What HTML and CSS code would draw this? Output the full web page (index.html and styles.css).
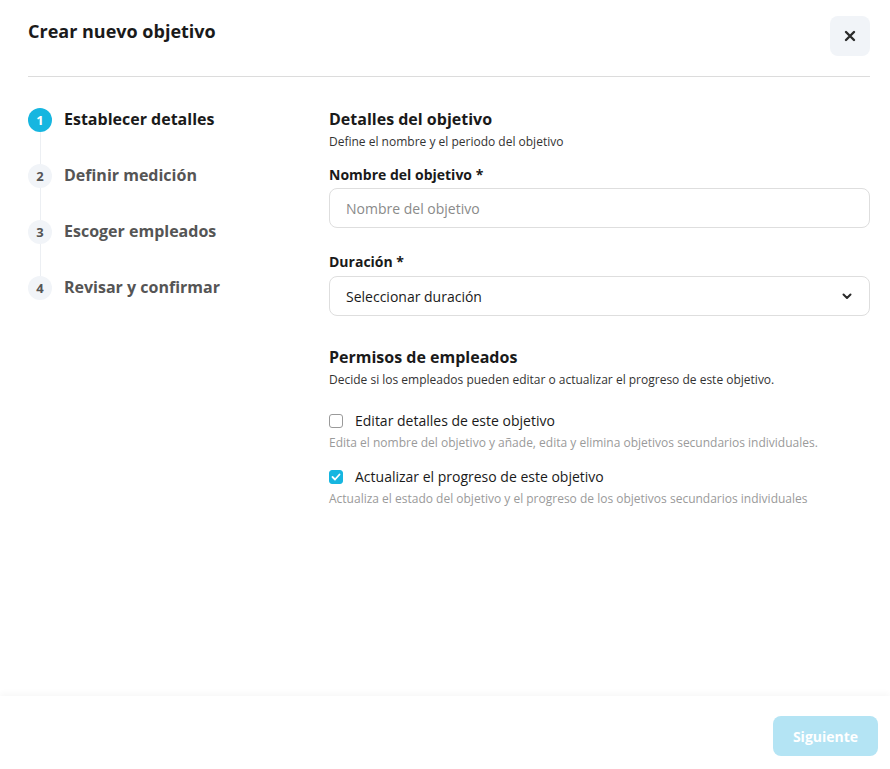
FILE: index.html
```html
<!DOCTYPE html>
<html lang="es">
<head>
  <meta charset="UTF-8">
  <title>Crear nuevo objetivo</title>
  <meta name="viewport" content="width=device-width, initial-scale=1.0">
  <link rel="stylesheet" href="styles.css">
</head>
<body>
<div class="modal">
  <div class="modal-head">
    <h1>Crear nuevo objetivo</h1>
    <button class="close" aria-label="Cerrar">
      <svg width="12" height="12" viewBox="0 0 12 12"><path d="M2 2l8 8M10 2l-8 8" stroke="#2a2a2a" stroke-width="2.4" stroke-linecap="round"/></svg>
    </button>
  </div>

  <div class="modal-body">
    <ul class="steps">
      <li class="step active"><span class="num">1</span><span class="label">Establecer detalles</span></li>
      <li class="step"><span class="num">2</span><span class="label">Definir medición</span></li>
      <li class="step"><span class="num">3</span><span class="label">Escoger empleados</span></li>
      <li class="step last"><span class="num">4</span><span class="label">Revisar y confirmar</span></li>
    </ul>

    <div class="form">
      <h2>Detalles del objetivo</h2>
      <p class="sub">Define el nombre y el periodo del objetivo</p>

      <label class="field-label">Nombre del objetivo *</label>
      <input class="field" placeholder="Nombre del objetivo">

      <label class="field-label second">Duración *</label>
      <div class="field select">
        <span>Seleccionar duración</span>
        <svg width="10" height="7" viewBox="0 0 10 7"><path d="M1.5 1.5l3.5 3.5 3.5-3.5" fill="none" stroke="#2a2a2a" stroke-width="2" stroke-linecap="round" stroke-linejoin="round"/></svg>
      </div>

      <h2 class="perm-title">Permisos de empleados</h2>
      <p class="sub">Decide si los empleados pueden editar o actualizar el progreso de este objetivo.</p>

      <div class="check-row first">
        <span class="box"></span>
        <span class="check-label">Editar detalles de este objetivo</span>
      </div>
      <p class="check-desc">Edita el nombre del objetivo y añade, edita y elimina objetivos secundarios individuales.</p>

      <div class="check-row">
        <span class="box on">
          <svg width="10" height="8" viewBox="0 0 10 8"><path d="M1.5 4l2.5 2.5 4.5-5" fill="none" stroke="#fff" stroke-width="1.8" stroke-linecap="round" stroke-linejoin="round"/></svg>
        </span>
        <span class="check-label">Actualizar el progreso de este objetivo</span>
      </div>
      <p class="check-desc">Actualiza el estado del objetivo y el progreso de los objetivos secundarios individuales</p>
    </div>
  </div>

  <div class="modal-foot">
    <button class="next" disabled>Siguiente</button>
  </div>
</div>
</body>
</html>
```

FILE: styles.css
```css
* { box-sizing: border-box; }
body {
  margin: 0;
  background: #fff;
  color: #1a1a1a;
  font-family: 'Open Sans', 'Noto Sans', sans-serif;
}
.modal {
  width: 890px;
  height: 769px;
  display: flex;
  flex-direction: column;
}
.modal-head {
  margin: 0 20px 0 28px;
  height: 77px;
  border-bottom: 1px solid #dcdcdc;
  display: flex;
  justify-content: space-between;
  align-items: flex-start;
}
.modal-head h1 {
  margin: 18px 0 0;
  font-size: 18px;
  font-weight: 700;
  line-height: 26px;
}
.close {
  margin-top: 16px;
  width: 40px;
  height: 40px;
  border: none;
  border-radius: 8px;
  background: #f1f4f8;
  display: flex;
  align-items: center;
  justify-content: center;
  cursor: pointer;
}
.modal-body {
  flex: 1;
  display: flex;
  padding: 31px 20px 0 28px;
}
.steps {
  list-style: none;
  margin: 0;
  padding: 0;
  width: 301px;
  flex-shrink: 0;
}
.step {
  display: flex;
  height: 56px;
  align-items: flex-start;
  position: relative;
}
.step::after {
  content: '';
  position: absolute;
  left: 11.5px;
  top: 24px;
  height: 32px;
  width: 1px;
  background: #eceff3;
}
.step.last::after { display: none; }
.num {
  width: 24px;
  height: 24px;
  border-radius: 50%;
  background: #f1f4f8;
  color: #555;
  font-size: 13px;
  font-weight: 700;
  display: flex;
  align-items: center;
  justify-content: center;
  flex-shrink: 0;
}
.label {
  margin-left: 12px;
  font-size: 16px;
  font-weight: 700;
  color: #555;
  line-height: 22px;
}
.step.active .num { background: #16b6e0; color: #fff; }
.step.active .label { color: #1a1a1a; }
.form { flex: 1; }
.form h2 {
  margin: 0;
  font-size: 16px;
  font-weight: 700;
  line-height: 22px;
}
.sub {
  margin: 3px 0 0;
  font-size: 12px;
  line-height: 18px;
  color: #333;
}
.field-label {
  display: block;
  margin-top: 15px;
  font-size: 14px;
  font-weight: 700;
  line-height: 18px;
}
.field-label.second { margin-top: 25px; }
.field {
  display: block;
  width: 100%;
  height: 40px;
  margin-top: 4px;
  border: 1px solid #dedede;
  border-radius: 8px;
  padding: 0 16px;
  font-family: inherit;
  font-size: 14px;
  color: #1a1a1a;
  outline: none;
}
.field::placeholder { color: #8a8a8a; }
.select {
  display: flex;
  align-items: center;
  justify-content: space-between;
  margin-top: 5px;
  padding-right: 17px;
}
.form h2.perm-title { margin-top: 30px; }
.check-row {
  display: flex;
  align-items: center;
  margin-top: 14px;
  height: 22px;
}
.check-row.first { margin-top: 21px; }
.box {
  width: 14px;
  height: 14px;
  border: 1px solid #9a9a9a;
  border-radius: 3px;
  display: flex;
  align-items: center;
  justify-content: center;
}
.box.on { background: #16b6e0; border-color: #16b6e0; }
.check-label {
  margin-left: 12px;
  font-size: 14px;
  line-height: 20px;
}
.check-desc {
  margin: 2px 0 0;
  font-size: 12px;
  line-height: 18px;
  color: #9a9a9a;
}
.modal-foot {
  height: 73px;
  display: flex;
  justify-content: flex-end;
  align-items: flex-start;
  padding: 20px 12px 0 0;
  box-shadow: 0 -3px 6px rgba(0, 0, 0, 0.03);
}
.next {
  width: 105px;
  height: 40px;
  border: none;
  border-radius: 8px;
  background: #b4e4f4;
  color: #fff;
  font-family: inherit;
  font-size: 14px;
  font-weight: 700;
}
```
